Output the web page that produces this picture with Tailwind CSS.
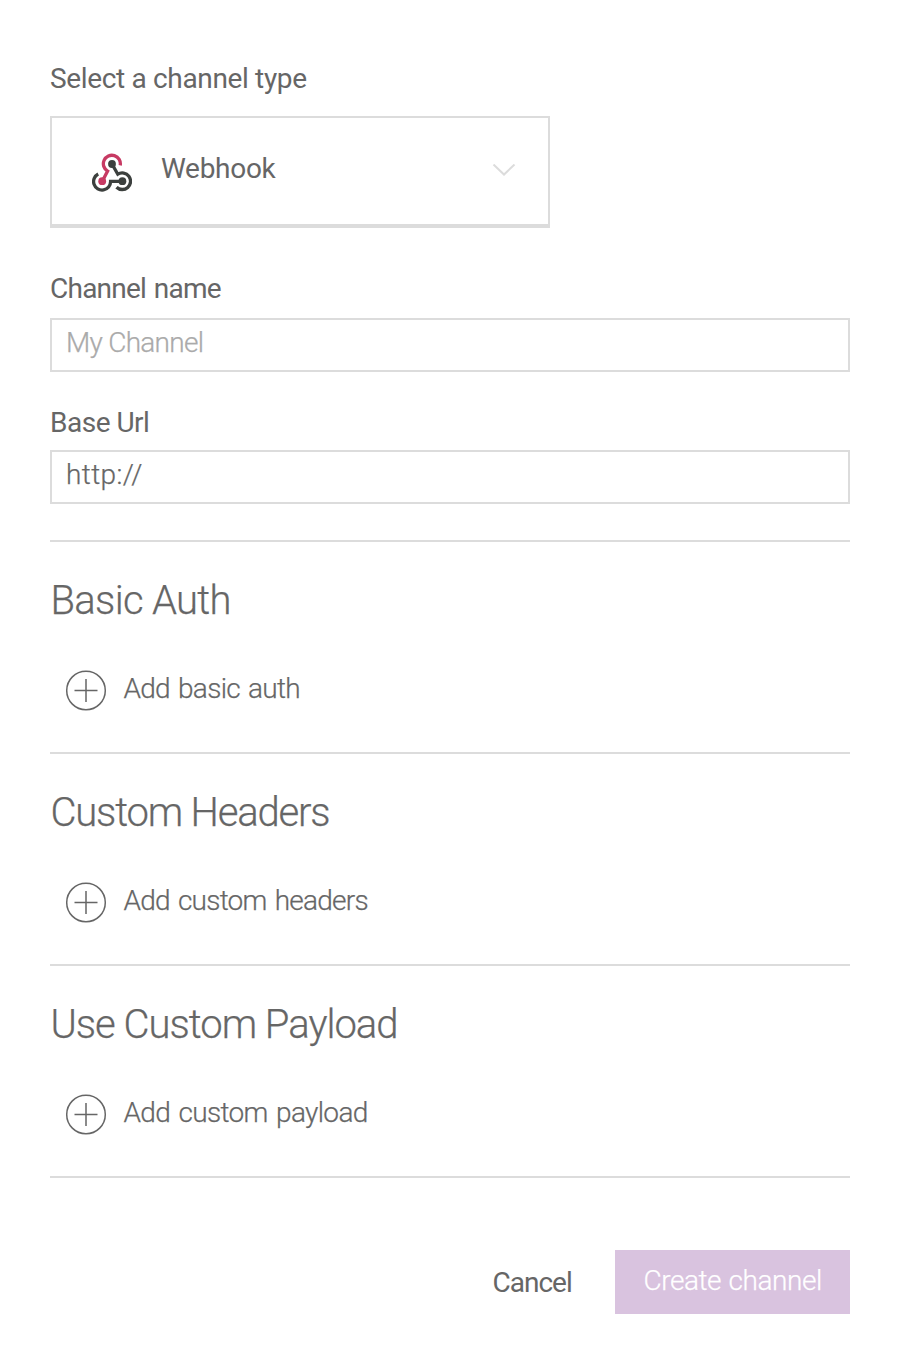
<!DOCTYPE html>
<html lang="en">
<head>
<meta charset="utf-8">
<title>Create channel</title>
<script src="https://cdn.jsdelivr.net/npm/@tailwindcss/browser@4"></script>
</head>
<body class="bg-white">
<form class="ml-[50px] flex w-[800px] flex-col pt-[63px] font-['Roboto',sans-serif] text-[28px] leading-8 text-[#666]">
  <label class="h-[53px] tracking-[-0.34px]">Select a channel type</label>
  <div class="flex h-[112px] w-[500px] items-start border-2 border-b-4 border-[#dcdcdc] pt-[35px] pr-[32px] pl-[40px]">
    <svg class="h-10 w-10" viewBox="92 153 40 40" fill="none" stroke-width="3.3">
      <path stroke="#c73a63" d="M120.2 165.4A8.5 8.5 0 1 0 107.6 171.1L102.3 181.2"/>
      <path stroke="#3c403e" d="M98.2 174A8.5 8.5 0 1 0 110.6 181.4H122.4"/>
      <path stroke="#3c403e" d="M112 164L117.8 174.2A8.3 8.3 0 1 1 116.5 187.2"/>
      <g stroke="none"><circle cx="112" cy="164" r="3.9" fill="#3c403e"/><circle cx="102.2" cy="181.2" r="3.9" fill="#c73a63"/><circle cx="122.4" cy="181.2" r="3.9" fill="#3c403e"/></g>
    </svg>
    <span class="ml-[29px] grow tracking-[-0.3px]">Webhook</span>
    <svg class="mt-[11px] h-3 w-6" viewBox="0 0 24 12" fill="none" stroke="#dcdcdc" stroke-width="2"><path d="M1.5 .5L12 10.5L22.5 .5"/></svg>
  </div>
  <label class="mt-[45px] h-[45px] tracking-[-0.76px] [word-spacing:1.5px]">Channel name</label>
  <input class="h-[54px] border-2 border-[#dcdcdc] pb-[6px] pl-[14px] font-light tracking-[-0.72px] outline-none [-webkit-text-stroke:0.25px] placeholder:text-[#aaa]" placeholder="My Channel">
  <label class="mt-[35px] h-[43px] tracking-[-0.5px]">Base Url</label>
  <input class="h-[54px] border-2 border-[#dcdcdc] pb-[6px] pl-[14px] font-light tracking-[0.4px] outline-none [-webkit-text-stroke:0.25px]" value="http://">

  <section class="mt-9 h-[212px] border-t-2 border-[#dcdcdc] pt-[35px] font-light [-webkit-text-stroke:0.25px]">
    <h2 class="pl-[0.5px] text-[40px] leading-12 tracking-[-0.7px]">Basic Auth</h2>
    <div class="mt-[44px] flex h-[42px] pl-[15px]">
      <svg class="h-[42px] w-[42px]" viewBox="0 0 42 42" fill="none" stroke="#666" stroke-width="1.5"><circle cx="21" cy="21.5" r="19.3"/><path d="M9.5 21.5h23M21 10v23"/></svg>
      <span class="mt-1 ml-[16.5px] tracking-[-0.72px] [word-spacing:2px]">Add basic auth</span>
    </div>
  </section>
  <section class="h-[212px] border-t-2 border-[#dcdcdc] pt-[35px] font-light [-webkit-text-stroke:0.25px]">
    <h2 class="pl-[0.5px] text-[40px] leading-12 tracking-[-1.18px]">Custom Headers</h2>
    <div class="mt-[44px] flex h-[42px] pl-[15px]">
      <svg class="h-[42px] w-[42px]" viewBox="0 0 42 42" fill="none" stroke="#666" stroke-width="1.5"><circle cx="21" cy="21.5" r="19.3"/><path d="M9.5 21.5h23M21 10v23"/></svg>
      <span class="mt-1 ml-[16.5px] tracking-[-0.76px] [word-spacing:2px]">Add custom headers</span>
    </div>
  </section>
  <section class="h-[214px] border-y-2 border-[#dcdcdc] pt-[35px] font-light [-webkit-text-stroke:0.25px]">
    <h2 class="pl-[0.5px] text-[40px] leading-12 tracking-[-1px]">Use Custom Payload</h2>
    <div class="mt-[44px] flex h-[42px] pl-[15px]">
      <svg class="h-[42px] w-[42px]" viewBox="0 0 42 42" fill="none" stroke="#666" stroke-width="1.5"><circle cx="21" cy="21.5" r="19.3"/><path d="M9.5 21.5h23M21 10v23"/></svg>
      <span class="mt-1 ml-[16.5px] tracking-[-0.64px] [word-spacing:2px]">Add custom payload</span>
    </div>
  </section>
  <div class="mt-[72px] flex h-16 justify-end">
    <button type="button" class="mr-[43px] h-16 w-[80px] pt-[2px] pl-[0.5px] text-left tracking-[-1px] whitespace-nowrap">Cancel</button>
    <button type="button" class="h-16 w-[235px] bg-[#d9c3df] pb-[2px] pl-[28.5px] text-left font-light tracking-[-0.45px] whitespace-nowrap text-white [-webkit-text-stroke:0.25px] [word-spacing:1px]">Create channel</button>
  </div>
</form>
</body>
</html>
